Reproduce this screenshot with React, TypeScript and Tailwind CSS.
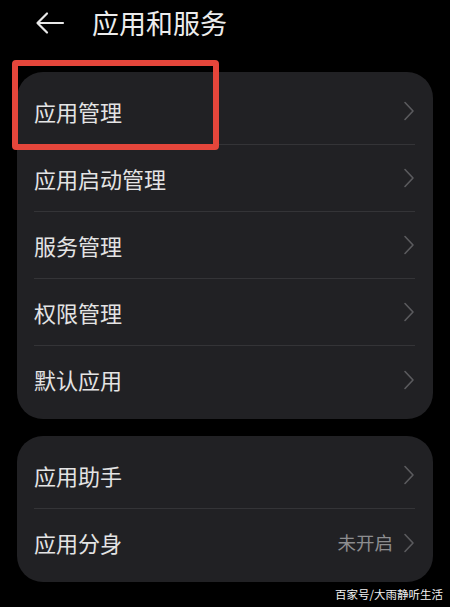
const font = { fontFamily: '"Noto Sans CJK SC", "Noto Sans", sans-serif' };

function Chevron() {
  return (
    <svg width="12" height="20" viewBox="0 0 12 20" fill="none" className="text-[#5b5b5e]">
      <path d="M2 1.5L10 10L2 18.5" stroke="currentColor" strokeWidth="1.6" strokeLinecap="round" strokeLinejoin="round" />
    </svg>
  );
}

function Row({ label, value, last }: { label: string; value?: string; last?: boolean }) {
  return (
    <div className="flex h-[67px] items-center pl-[17px] pr-[18px]">
      <div
        className={
          "flex h-full flex-1 items-center " + (last ? "" : "border-b border-[#343437]")
        }
      >
        <span className="flex-1 text-[22px] text-[#e4e4e4]">{label}</span>
        {value && <span className="mr-[10px] text-[18.5px] text-[#8d8d8f]">{value}</span>}
        <Chevron />
      </div>
    </div>
  );
}

export default function App() {
  const group1 = ["应用管理", "应用启动管理", "服务管理", "权限管理", "默认应用"];
  return (
    <div className="relative h-[607px] w-[450px] overflow-hidden bg-black" style={font}>
      <div className="flex h-[45px] items-center pl-[35px]">
        <svg width="30" height="24" viewBox="0 0 30 24" fill="none" className="text-[#e8e8e8]">
          <path d="M28 12H3M12 2.5L2.5 12L12 21.5" stroke="currentColor" strokeWidth="2.2" strokeLinecap="round" strokeLinejoin="round" />
        </svg>
        <span className="ml-[27px] text-[27px] leading-none text-[#ececec]">应用和服务</span>
      </div>

      <div className="mx-[17px] mt-[27px] rounded-[26px] bg-[#212124] py-[6px]">
        {group1.map((l, i) => (
          <Row key={l} label={l} last={i === group1.length - 1} />
        ))}
      </div>

      <div className="mx-[17px] mt-[17px] rounded-[26px] bg-[#212124] py-[6px]">
        <Row label="应用助手" />
        <Row label="应用分身" value="未开启" last />
      </div>

      <div className="absolute left-[12px] top-[60px] h-[90px] w-[207px] rounded-[4px] border-[6px] border-[#e5463b]" />

      <div className="absolute bottom-[4px] right-[7px] text-[11.5px] text-[#f2f2f2]">百家号/大雨静听生活</div>
    </div>
  );
}
